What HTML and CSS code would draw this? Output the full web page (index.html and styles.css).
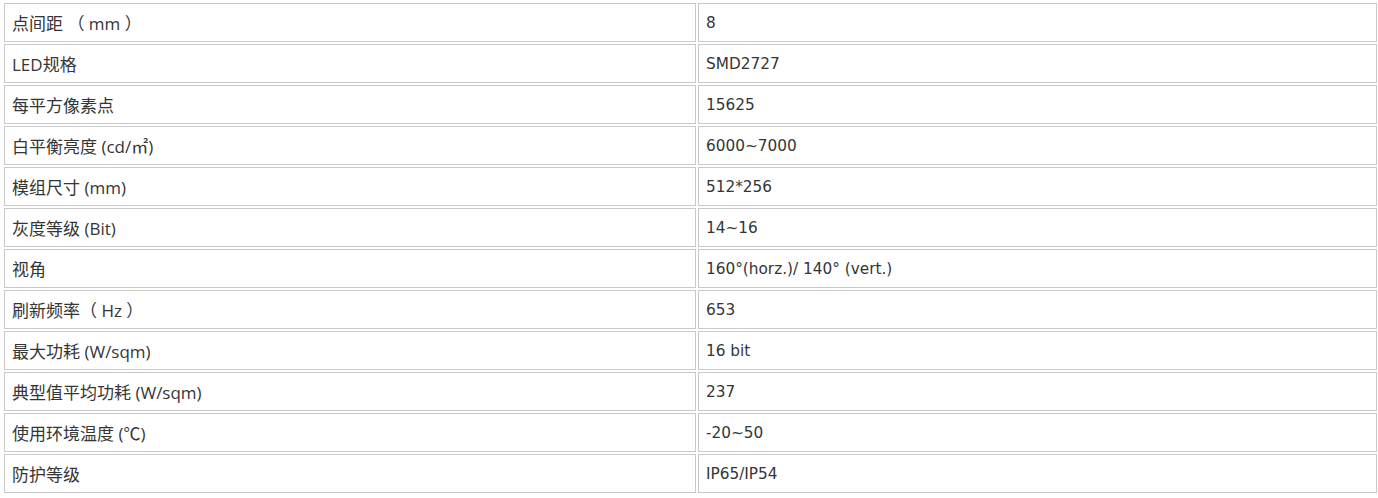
FILE: index.html
```html
<!DOCTYPE html>
<html lang="zh-CN">
<head>
<meta charset="utf-8">
<title>参数</title>
<link rel="stylesheet" href="styles.css">
</head>
<body>
<table class="spec">
  <colgroup><col class="c-name"><col class="c-val"></colgroup>
  <tbody>
    <tr><td class="name">点间距 （ mm ）</td><td class="val">8</td></tr>
    <tr><td class="name">LED规格</td><td class="val">SMD2727</td></tr>
    <tr><td class="name">每平方像素点</td><td class="val">15625</td></tr>
    <tr><td class="name">白平衡亮度 (cd/㎡)</td><td class="val">6000~7000</td></tr>
    <tr><td class="name">模组尺寸 (mm)</td><td class="val">512*256</td></tr>
    <tr><td class="name">灰度等级 (Bit)</td><td class="val">14~16</td></tr>
    <tr><td class="name">视角</td><td class="val">160°(horz.)/ 140° (vert.)</td></tr>
    <tr><td class="name">刷新频率（ Hz ）</td><td class="val">653</td></tr>
    <tr><td class="name">最大功耗 (W/sqm)</td><td class="val">16 bit</td></tr>
    <tr><td class="name">典型值平均功耗 (W/sqm)</td><td class="val">237</td></tr>
    <tr><td class="name">使用环境温度 (℃)</td><td class="val">-20~50</td></tr>
    <tr><td class="name">防护等级</td><td class="val">IP65/IP54</td></tr>
  </tbody>
</table>
</body>
</html>
```

FILE: styles.css
```css
html, body {
  margin: 0;
  padding: 0;
  background: #ffffff;
}

.spec {
  margin: 1px 0 0 2px;
  width: 1373px;
  table-layout: fixed;
  border-collapse: separate;
  border-spacing: 2px;
  color: #353535;
}

.c-name { width: 692px; }
.c-val { width: 679px; }

.spec td {
  padding: 0 8px 0 7px;
  border: 1px solid #c9c9c9;
  vertical-align: middle;
  white-space: nowrap;
  box-sizing: border-box;
  height: 39px;
}

.name {
  font-family: "Open Sans", "Noto Sans CJK SC", sans-serif;
  font-size: 17px;
  padding-bottom: 3px;
}

.val {
  font-family: "DejaVu Sans", "Noto Sans CJK SC", sans-serif;
  font-size: 15.3px;
  padding-left: 8px;
  padding-top: 1px;
}
```
